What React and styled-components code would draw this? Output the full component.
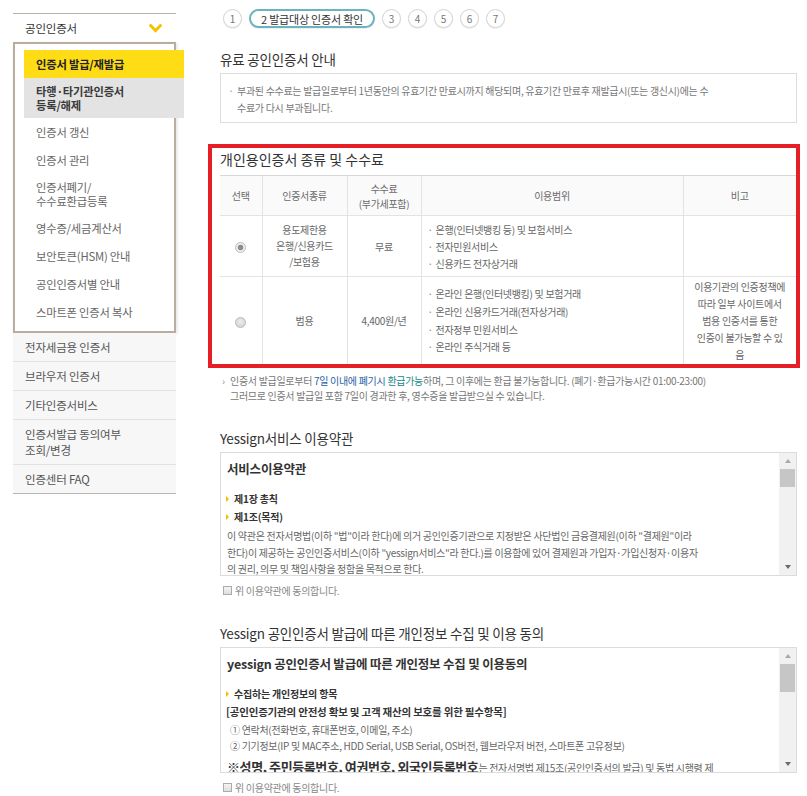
import React from 'react';
import styled, { createGlobalStyle } from 'styled-components';

const GlobalStyle = createGlobalStyle`
  html, body { margin: 0; padding: 0; background: #fff; }
  body {
    font-family: "Noto Sans CJK KR", "Noto Sans", sans-serif;
    color: #666;
  }
  * { box-sizing: border-box; }
`;

const Page = styled.div`
  display: flex;
  align-items: flex-start;
  width: 807px;
  height: 796px;
  overflow: hidden;
`;

/* ---------- Sidebar ---------- */
const Sidebar = styled.nav`
  flex-shrink: 0;
  width: 163px;
  margin: 13px 0 0 13px;
`;

const SideHead = styled.div`
  display: flex;
  align-items: center;
  justify-content: space-between;
  height: 29px;
  padding: 0 14px 0 12px;
  border-top: 1px solid #b9b1a8;
  font-size: 11.5px;
  letter-spacing: -0.2px;
  color: #333;
`;

const SubBox = styled.ul`
  list-style: none;
  margin: 0;
  padding: 6px 0 5px 9px;
  border: 2px solid #b8ad9f;
  box-shadow: 1px 1px 3px rgba(0, 0, 0, 0.12);
`;

const SubItem = styled.li`
  display: flex;
  align-items: center;
  min-height: 28px;
  margin-right: -10px;
  padding: 6px 12px;
  line-height: 14px;
  font-size: 11.3px;
  letter-spacing: -0.2px;
  white-space: pre-line;
  font-weight: ${(p) => (p.$state ? 700 : 400)};
  color: ${(p) => (p.$state === 'active' ? '#222' : p.$state === 'hover' ? '#3a3a3a' : '#666')};
  background: ${(p) => (p.$state === 'active' ? '#fedd17' : p.$state === 'hover' ? '#e3e3e3' : 'transparent')};
`;

const SideLink = styled.div`
  padding: 6px 12px;
  line-height: 16px;
  font-size: 11.5px;
  letter-spacing: -0.2px;
  color: #555;
  white-space: pre-line;
  background: #f7f7f7;
  border-bottom: 1px solid #e2e2e2;
  &:last-child { border-bottom-color: #b5b5b5; }
`;

/* ---------- Main ---------- */
const Main = styled.main`
  display: flex;
  flex-direction: column;
  width: 577px;
  margin-left: 44px;
  padding-top: 9px;
`;

const Steps = styled.ol`
  display: flex;
  gap: 7px;
  margin: 0 0 0 3px;
  padding: 0;
  list-style: none;
`;

const Step = styled.li`
  display: flex;
  align-items: center;
  justify-content: center;
  height: 19px;
  min-width: 19px;
  padding: 0 ${(p) => (p.$active ? '10px' : '0')};
  border-radius: 10px;
  border: ${(p) => (p.$active ? '2px solid #6cb2c0' : '1px solid #d4d4d4')};
  box-shadow: 0 1px 1px rgba(0, 0, 0, 0.07);
  font-size: ${(p) => (p.$active ? '11px' : '10px')};
  letter-spacing: ${(p) => (p.$active ? '-0.2px' : '0')};
  color: ${(p) => (p.$active ? '#333' : '#777')};
  background: #fff;
`;

const Title = styled.h2`
  margin: ${(p) => p.$mt || 0}px 0 5px;
  font-size: 13.5px;
  line-height: 18px;
  font-weight: 400;
  letter-spacing: -0.2px;
  color: #333;
`;

const Notice = styled.div`
  border: 1px solid #ddd;
  padding: 8px 16px 6px 4px;
`;

const BulletText = styled.p`
  margin: 0;
  padding-left: 12px;
  text-indent: -12px;
  font-size: 10px;
  line-height: 17px;
  letter-spacing: -0.3px;
  color: #777;
  &::before {
    content: '·';
    display: inline-block;
    width: 12px;
    text-indent: 0;
    text-align: center;
    color: #999;
  }
`;

const Highlight = styled.section`
  margin: 21px -3px 0 -12px;
  border: 4px solid #e61f26;
  padding: 2px 0 0 8px;
`;

const TableTitle = styled.h3`
  margin: 0 0 7px;
  font-size: 14px;
  line-height: 18px;
  font-weight: 400;
  letter-spacing: 0;
  color: #333;
`;

const Table = styled.table`
  width: 576px;
  border-collapse: collapse;
  table-layout: fixed;
  font-size: 10px;
  letter-spacing: -0.3px;
  color: #666;
`;

const Th = styled.th`
  height: 40px;
  padding: 0 4px;
  background: #fafafa;
  font-weight: 400;
  line-height: 15px;
  color: #6a6a6a;
  white-space: pre-line;
  border-top: 1px solid #d8d8d8;
  border-bottom: 1px solid #e3e3e3;
  border-left: 1px solid #e3e3e3;
  &:first-child { border-left: none; }
`;

const Row = styled.tr`
  height: ${(p) => p.$h}px;
  &:last-child td { border-bottom: none; }
`;

const Td = styled.td`
  padding: 1px 4px;
  text-align: ${(p) => (p.$left ? 'left' : 'center')};
  vertical-align: middle;
  line-height: ${(p) => p.$lh || 17}px;
  white-space: pre-line;
  border-bottom: 1px solid #e3e3e3;
  border-left: 1px solid #e3e3e3;
  &:first-child { border-left: none; }
`;

const UseList = styled.ul`
  list-style: none;
  margin: 0;
  padding: 0 0 0 2px;
`;

const UseItem = styled.li`
  line-height: ${(p) => p.$lh}px;
  white-space: nowrap;
  &::before {
    content: '·';
    display: inline-block;
    width: 8px;
    color: #888;
  }
`;

const Radio = styled.input.attrs({ type: 'radio' })`
  appearance: none;
  width: 11px;
  height: 11px;
  margin: 0;
  vertical-align: middle;
  border-radius: 50%;
  border: 1px solid #bcbcbc;
  background: radial-gradient(circle at 50% 40%, #ececec, #cfcfcf);
  &:checked {
    background: radial-gradient(circle, #8d8d8d 0 2.4px, #efefef 3.2px);
  }
`;

const Note = styled.p`
  margin: 5px 0 0;
  padding-left: 10px;
  text-indent: -8px;
  font-size: 10px;
  line-height: 15px;
  letter-spacing: -0.3px;
  color: #777;
  &::before {
    content: '›';
    display: inline-block;
    width: 8px;
    text-indent: 0;
    color: #999;
  }
`;

const Blue = styled.span`
  color: ${(p) => (p.$teal ? '#158789' : '#1f62a6')};
`;

/* ---------- Terms boxes with drawn scrollbar ---------- */
const TermsBox = styled.div`
  display: flex;
  height: ${(p) => p.$h}px;
  border: 1px solid #dcdcdc;
`;

const TermsContent = styled.div`
  flex: 1;
  min-width: 0;
  overflow: hidden;
  padding: 6px 12px 0 5px;
  color: #666;
`;

const ScrollRail = styled.div`
  display: flex;
  flex-direction: column;
  width: 17px;
  flex-shrink: 0;
  background: #f1f1f1;
`;

const ScrollBtn = styled.div`
  display: flex;
  align-items: center;
  justify-content: center;
  height: 16px;
  flex-shrink: 0;
  &::before {
    content: '';
    width: 0;
    height: 0;
    border-left: 3.5px solid transparent;
    border-right: 3.5px solid transparent;
    ${(p) => (p.$down ? 'border-top: 4px solid #6a6a6a;' : 'border-bottom: 4px solid #a9a9a9;')}
  }
`;

const ScrollTrack = styled.div`
  flex: 1;
  padding: 0 1px;
`;

const ScrollThumb = styled.div`
  height: ${(p) => p.$h}px;
  background: #c6c6c6;
`;

const TermsTitle = styled.h4`
  margin: 0 0 11px 1px;
  font-size: 12.5px;
  line-height: 20px;
  font-weight: 700;
  letter-spacing: -0.2px;
  color: #333;
`;

const SubHead = styled.p`
  display: flex;
  align-items: center;
  gap: 5px;
  margin: 0;
  font-size: 10px;
  line-height: 18px;
  font-weight: 700;
  letter-spacing: -0.2px;
  color: #333;
  &::before {
    content: '';
    width: 0;
    height: 0;
    border-left: 3px solid #f2c200;
    border-top: 3.5px solid transparent;
    border-bottom: 3.5px solid transparent;
  }
`;

const BoldLine = styled.p`
  margin: 0;
  font-size: 10.5px;
  line-height: 18px;
  font-weight: 700;
  letter-spacing: -0.2px;
  color: #333;
`;

const Para = styled.p`
  margin: ${(p) => p.$mt || 0}px 0 0 ${(p) => p.$indent || 1}px;
  font-size: 10px;
  line-height: ${(p) => p.$lh || 16.5}px;
  letter-spacing: -0.3px;
  color: #666;
  white-space: pre-line;
`;

const Emph = styled.strong`
  font-size: 13px;
  font-weight: 700;
  color: #333;
  letter-spacing: -0.4px;
`;

const Agree = styled.label`
  display: flex;
  align-items: center;
  gap: 3px;
  margin: 7px 0 0 3px;
  font-size: 10px;
  line-height: 15px;
  letter-spacing: -0.3px;
  color: #888;
`;

const Check = styled.input.attrs({ type: 'checkbox' })`
  appearance: none;
  width: 9px;
  height: 9px;
  margin: 0;
  border: 1px solid #ababab;
  background: linear-gradient(#f4f4f4, #dedede);
`;

const Chevron = () => (
  <svg width="13" height="9" viewBox="0 0 13 9" aria-hidden="true">
    <polyline points="1.6,1.6 6.5,6.6 11.4,1.6" fill="none" stroke="#f4c200" strokeWidth="2.9" strokeLinecap="square" />
  </svg>
);

const Scrollbar = ({ thumb }) => (
  <ScrollRail aria-hidden="true">
    <ScrollBtn />
    <ScrollTrack>
      <ScrollThumb $h={thumb} />
    </ScrollTrack>
    <ScrollBtn $down />
  </ScrollRail>
);

const subMenu = [
  { label: '인증서 발급/재발급', state: 'active' },
  { label: '타행·타기관인증서\n등록/해제', state: 'hover' },
  { label: '인증서 갱신' },
  { label: '인증서 관리' },
  { label: '인증서폐기/\n수수료환급등록' },
  { label: '영수증/세금계산서' },
  { label: '보안토큰(HSM) 안내' },
  { label: '공인인증서별 안내' },
  { label: '스마트폰 인증서 복사' },
];

const sideLinks = ['전자세금용 인증서', '브라우저 인증서', '기타인증서비스', '인증서발급 동의여부\n조회/변경', '인증센터 FAQ'];

const rows = [
  {
    h: 61,
    checked: true,
    kind: '용도제한용\n은행/신용카드\n/보험용',
    fee: '무료',
    uses: ['은행(인터넷뱅킹 등) 및 보험서비스', '전자민원서비스', '신용카드 전자상거래'],
    lh: 17,
    note: '',
  },
  {
    h: 87,
    checked: false,
    kind: '범용',
    fee: '4,400원/년',
    uses: ['온라인 은행(인터넷뱅킹) 및 보험거래', '온라인 신용카드거래(전자상거래)', '전자정부 민원서비스', '온라인 주식거래 등'],
    lh: 17.6,
    note: '이용기관의 인증정책에\n따라 일부 사이트에서\n범용 인증서를 통한\n인증이 불가능할 수 있\n음',
  },
];

export default function App() {
  return (
    <>
      <GlobalStyle />
      <Page>
        <Sidebar>
          <SideHead>
            <span>공인인증서</span>
            <Chevron />
          </SideHead>
          <SubBox>
            {subMenu.map((m) => (
              <SubItem key={m.label} $state={m.state}>{m.label}</SubItem>
            ))}
          </SubBox>
          {sideLinks.map((l) => (
            <SideLink key={l}>{l}</SideLink>
          ))}
        </Sidebar>

        <Main>
          <Steps>
            <Step>1</Step>
            <Step $active>2 발급대상 인증서 확인</Step>
            <Step>3</Step>
            <Step>4</Step>
            <Step>5</Step>
            <Step>6</Step>
            <Step>7</Step>
          </Steps>

          <Title $mt={22}>유료 공인인증서 안내</Title>
          <Notice>
            <BulletText>
              부과된 수수료는 발급일로부터 1년동안의 유효기간 만료시까지 해당되며, 유효기간 만료후 재발급시(또는 갱신시)에는 수<br />
              수료가 다시 부과됩니다.
            </BulletText>
          </Notice>

          <Highlight>
            <TableTitle>개인용인증서 종류 및 수수료</TableTitle>
            <Table>
              <colgroup>
                <col style={{ width: 42 }} />
                <col style={{ width: 85 }} />
                <col style={{ width: 74 }} />
                <col style={{ width: 262 }} />
                <col style={{ width: 113 }} />
              </colgroup>
              <thead>
                <tr>
                  <Th>선택</Th>
                  <Th>인증서종류</Th>
                  <Th>{'수수료\n(부가세포함)'}</Th>
                  <Th>이용범위</Th>
                  <Th>비고</Th>
                </tr>
              </thead>
              <tbody>
                {rows.map((r) => (
                  <Row key={r.kind} $h={r.h}>
                    <Td>
                      <Radio name="certType" defaultChecked={r.checked} />
                    </Td>
                    <Td $lh={16}>{r.kind}</Td>
                    <Td>{r.fee}</Td>
                    <Td $left>
                      <UseList>
                        {r.uses.map((u) => (
                          <UseItem key={u} $lh={r.lh}>{u}</UseItem>
                        ))}
                      </UseList>
                    </Td>
                    <Td>{r.note}</Td>
                  </Row>
                ))}
              </tbody>
            </Table>
          </Highlight>

          <Note>
            인증서 발급일로부터 <Blue>7일 이내에 폐기시</Blue> <Blue $teal>환급가능</Blue>하며, 그 이후에는 환급 불가능합니다. (폐기·환급가능시간 01:00-23:00)<br />
            그러므로 인증서 발급일 포함 7일이 경과한 후, 영수증을 발급받으실 수 있습니다.
          </Note>

          <Title $mt={26}>Yessign서비스 이용약관</Title>
          <TermsBox $h={124}>
            <TermsContent>
              <TermsTitle>서비스이용약관</TermsTitle>
              <SubHead>제1장 총칙</SubHead>
              <SubHead>제1조(목적)</SubHead>
              <Para $mt={2}>
                {'이 약관은 전자서명법(이하 "법"이라 한다)에 의거 공인인증기관으로 지정받은 사단법인 금융결제원(이하 "결제원"이라\n한다)이 제공하는 공인인증서비스(이하 "yessign서비스"라 한다.)를 이용함에 있어 결제원과 가입자·가입신청자·이용자\n의 권리, 의무 및 책임사항을 정함을 목적으로 한다.'}
              </Para>
            </TermsContent>
            <Scrollbar thumb={18} />
          </TermsBox>
          <Agree>
            <Check />위 이용약관에 동의합니다.
          </Agree>

          <Title $mt={26}>Yessign 공인인증서 발급에 따른 개인정보 수집 및 이용 동의</Title>
          <TermsBox $h={126}>
            <TermsContent>
              <TermsTitle>yessign 공인인증서 발급에 따른 개인정보 수집 및 이용동의</TermsTitle>
              <SubHead>수집하는 개인정보의 항목</SubHead>
              <BoldLine>[공인인증기관의 안전성 확보 및 고객 재산의 보호를 위한 필수항목]</BoldLine>
              <Para $indent={4} $lh={17}>① 연락처(전화번호, 휴대폰번호, 이메일, 주소)</Para>
              <Para $indent={4} $lh={16}>② 기기정보(IP 및 MAC주소, HDD Serial, USB Serial, OS버전, 웹브라우저 버전, 스마트폰 고유정보)</Para>
              <Para $mt={3} $lh={20}>
                <Emph>※성명, 주민등록번호, 여권번호, 외국인등록번호</Emph>는 전자서명법 제15조(공인인증서의 발급) 및 동법 시행령 제
              </Para>
            </TermsContent>
            <Scrollbar thumb={28} />
          </TermsBox>
          <Agree>
            <Check />위 이용약관에 동의합니다.
          </Agree>
        </Main>
      </Page>
    </>
  );
}
